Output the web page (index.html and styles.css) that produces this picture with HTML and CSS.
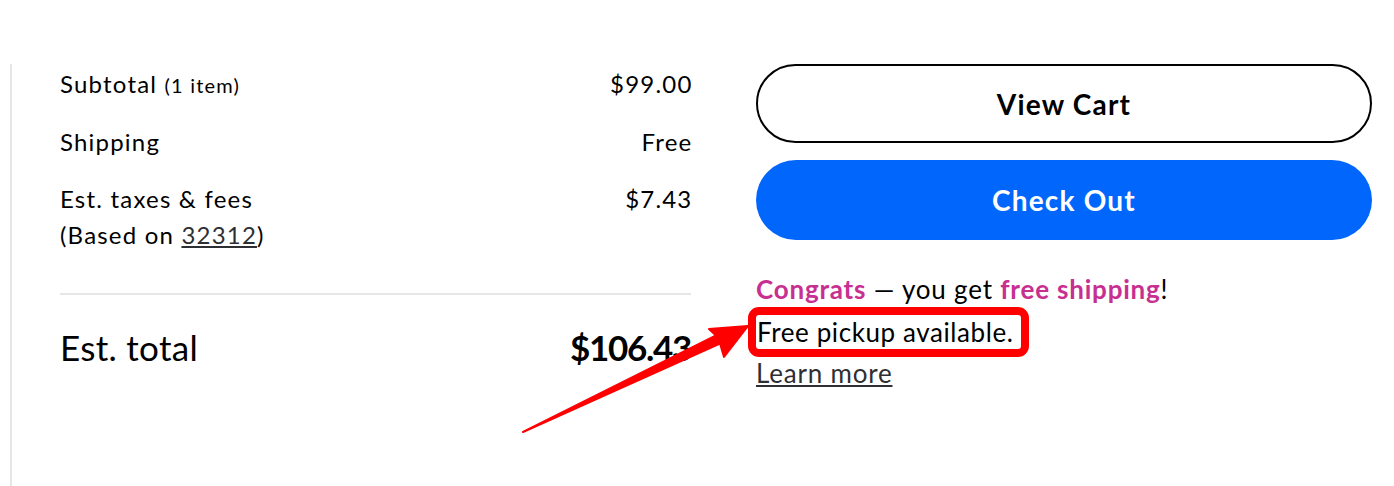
FILE: index.html
```html
<!DOCTYPE html>
<html lang="en">

<head>
  <meta charset="UTF-8">
  <meta name="viewport" content="width=device-width, initial-scale=1.0">
  <title>Cart summary</title>

  <link rel="stylesheet" href="styles.css">
</head>

<body>

  <main class="summary">
    <section class="totals">
      <div class="row">
        <span>Subtotal <small>(1 item)</small></span>
        <span class="value">$99.00</span>
      </div>
      <div class="row">
        <span>Shipping</span>
        <span class="value">Free</span>
      </div>
      <div class="row">
        <span>Est. taxes &amp; fees<br>(Based on <a href="#">32312</a>)</span>
        <span class="value">$7.43</span>
      </div>

      <hr class="divider">

      <div class="row total">
        <span>Est. total</span>
        <strong>$106.43</strong>
      </div>
    </section>

    <section class="actions">
      <button class="btn btn-outline">View Cart</button>
      <button class="btn btn-primary">Check Out</button>

      <p class="congrats"><b>Congrats</b> — you get <b>free shipping</b>!</p>
      <p class="pickup"><span class="highlight">Free pickup available.</span></p>
      <a class="learn" href="#">Learn more</a>
    </section>
  </main>

  <!-- annotation arrow -->
  <svg class="arrow" width="1394" height="486" viewBox="0 0 1394 486">
    <path d="M523,432 L716,335.5 L709,329 L748,326 L724,357 L720,343.5 Z" fill="#f00" stroke="#f00" stroke-width="2" stroke-linejoin="round" />
  </svg>

</body>

</html>
```

FILE: styles.css
```css
body {
  margin: 0;
  font-family: Lato, "Noto Sans", sans-serif;
  color: #000;
  background: #fff;
  position: relative;
  height: 486px;
  overflow: hidden;
}

.summary {
  display: flex;
  gap: 65px;
  margin: 64px 0 0 10px;
  padding-left: 48px;
  border-left: 2px solid #e6e6e6;
  min-height: 422px;
}

.totals {
  width: 631px;
  padding-top: 2px;
  display: flex;
  flex-direction: column;
  gap: 21px;
}

.row {
  display: flex;
  justify-content: space-between;
  font-size: 24px;
  line-height: 36px;
  letter-spacing: 1.2px;
}

.row .value {
  margin-right: -1.5px;
}

.row small {
  font-size: 20px;
}

.row a {
  color: #2e2f32;
}

.divider {
  width: 100%;
  height: 2px;
  border: none;
  background: #e6e6e6;
  margin: 19px 0 7px;
}

.total {
  font-size: 35px;
  line-height: 48px;
  letter-spacing: 0.3px;
}

.total strong {
  letter-spacing: -1.3px;
}

.actions {
  width: 616px;
  display: flex;
  flex-direction: column;
  align-items: flex-start;
}

.btn {
  width: 100%;
  border-radius: 40px;
  font-family: inherit;
  font-size: 28px;
  font-weight: bold;
  letter-spacing: 1.2px;
  cursor: pointer;
}

.btn-outline {
  height: 79px;
  background: #fff;
  color: #000;
  border: 2px solid #000;
  margin-bottom: 17px;
}

.btn-primary {
  height: 80px;
  background: #0066fc;
  color: #fff;
  border: none;
}

.congrats {
  margin: 28px 0 0;
  font-size: 26px;
  line-height: 42px;
  letter-spacing: 0.8px;
}

.congrats b {
  color: #c72f91;
}

.pickup {
  margin: 5px 0 0;
  font-size: 26px;
  line-height: 34px;
  letter-spacing: 0.6px;
}

.highlight {
  display: inline-block;
  padding: 0 7px 0 1px;
  outline: 8px solid #f00;
  border-radius: 3px;
}

.learn {
  margin-top: 6px;
  font-size: 26px;
  line-height: 36px;
  letter-spacing: 0.8px;
  color: #2e2f32;
}

.arrow {
  position: absolute;
  top: 0;
  left: 0;
  pointer-events: none;
}
```
